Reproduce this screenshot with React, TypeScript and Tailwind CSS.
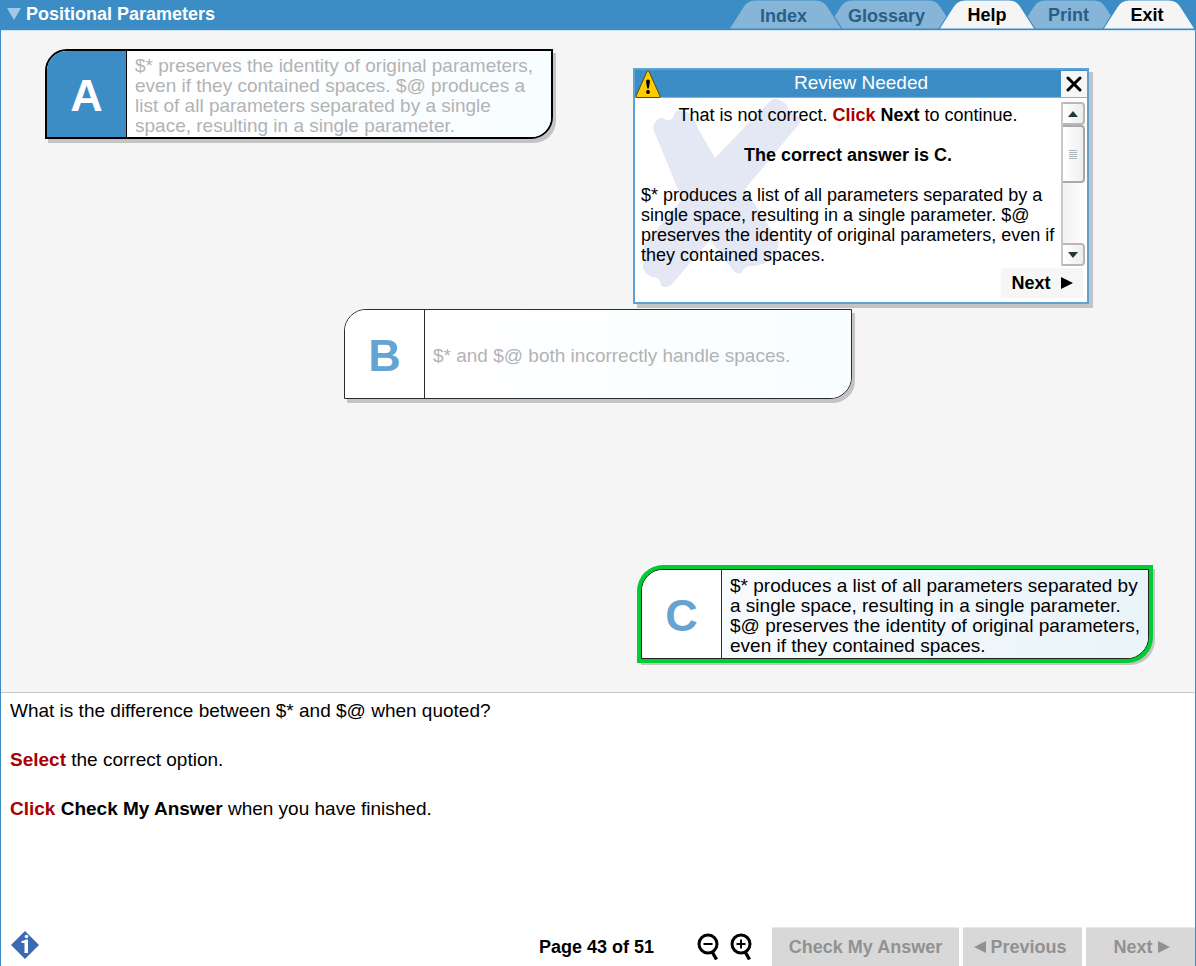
import { useState } from "react";
import type { ReactNode } from "react";
import clsx from "clsx";

type TabProps = { label: string; width: number; className: string; active?: boolean };

function tabPath(w: number) {
  return `M0 29 L14 7 Q18 0 26 0 H${w - 26} Q${w - 18} 0 ${w - 14} 7 L${w} 29 Z`;
}

function Tab({ label, width, className, active = false }: TabProps) {
  return (
    <button
      type="button"
      className={clsx(
        "relative h-[29px] shrink-0 text-center text-lg font-bold leading-7",
        active ? "z-20 text-black" : "text-[#275f89]",
        className,
      )}
    >
      <svg
        className="absolute inset-0 h-full w-full overflow-visible"
        viewBox={`0 0 ${width} 29`}
        preserveAspectRatio="none"
        aria-hidden="true"
      >
        <path d={tabPath(width)} fill={active ? "#f5f5f5" : "#87b5d8"} stroke="#3c8dc5" strokeWidth="1.2" />
      </svg>
      <span className="relative">{label}</span>
    </button>
  );
}

type CardProps = {
  letter: string;
  text: string;
  chosen?: boolean;
  correct?: boolean;
  className: string;
  onSelect: () => void;
};

function AnswerCard({ letter, text, chosen = false, correct = false, className, onSelect }: CardProps) {
  return (
    <button
      type="button"
      aria-pressed={chosen}
      onClick={onSelect}
      className={clsx(
        "flex h-[90px] w-[508px] overflow-hidden rounded-tl-[22px] rounded-br-[22px] border bg-white text-left",
        correct
          ? "border-[#222] text-black shadow-[0_0_0_4px_#00cc33,3px_3px_0_3px_#c4c4c4]"
          : "text-[#b3b3b3] shadow-[3px_4px_0_#c4c4c4]",
        chosen ? "border-2 border-black" : "border-[#2b2b2b]",
        className,
      )}
    >
      <span
        className={clsx(
          "flex w-20 shrink-0 items-center justify-center self-stretch border-r pt-1 text-[45px] font-bold",
          chosen ? "border-black bg-[#3c8dc5] text-white" : "border-[#2b2b2b] bg-white text-[#65a4d2]",
        )}
      >
        {letter}
      </span>
      <span
        className={clsx(
          "flex flex-1 items-center self-stretch bg-linear-to-r pt-1 pl-2 text-[19px] leading-5",
          correct ? "from-[#f8fbfe] to-[#e9f4f9]" : "from-white to-[#f8fdff]",
        )}
      >
        <span>{text}</span>
      </span>
    </button>
  );
}

function Dialog({ onClose }: { onClose: () => void }) {
  return (
    <section
      role="dialog"
      aria-labelledby="review-title"
      className="absolute top-[37px] right-[106px] z-10 w-[456px] border-2 border-[#5ca2d3] bg-white shadow-[4px_4px_0_#c4c4c4]"
    >
      <header className="flex h-7 items-center border-b border-[#87b5d8] bg-[#3c8dc5]">
        <svg className="h-7 w-[26px]" viewBox="0 0 26 28" aria-hidden="true">
          <path d="M12 1.5 Q13 0 14 1.5 L25 26 Q25.500 27.500 24 27.500 H2 Q.5 27.500 1 26 Z" fill="#ffcc00" stroke="#4a4a20" strokeWidth="1" />
          <path d="M11 11.500 Q11 9.500 13 9.500 Q15 9.500 15 11.500 L13.700 18.500 H12.300 Z" fill="#000" />
          <circle cx="13" cy="22" r="1.900" fill="#000" />
        </svg>
        <h2 id="review-title" className="flex-1 text-center text-[19px] text-white">
          Review Needed
        </h2>
        <button type="button" aria-label="Close" onClick={onClose} className="flex h-[26px] w-[26px] items-center justify-center bg-[#f6f6f6]">
          <svg className="h-4 w-4" viewBox="0 0 16 16" aria-hidden="true">
            <path d="M2 2 L14 14 M14 2 L2 14" stroke="#000" strokeWidth="3" strokeLinecap="round" />
          </svg>
        </button>
      </header>
      <div className="flex pt-1">
        <div className="relative flex-1 px-1.5 text-lg leading-5">
          <svg className="absolute -top-1 left-2 h-[190px] w-[158px]" viewBox="643 98 158 190" aria-hidden="true">
            <path
              d="M654 131 Q652 126 655 123 Q658 117 663 118 Q667 121 670 120 Q673 119 674 115 Q675 109 682 111 Q689 111 694 119 Q696 124 700 132 L715 158 L767 104 Q774 97 779 100 Q786 102 788 108 Q788 112 796 115 Q802 118 799 124 L745 189 L777 239 Q781 245 776 251 Q771 257 767 262 Q760 266 748 266 Q744 268 742 272 Q738 276 733 270 L710 240 L672 284 Q666 290 661 285 Q660 277 652 277 Q642 273 643 264 Q646 257 643 251 Q643 245 648 240 L682 199 Z"
              fill="#e4e7f4"
            />
          </svg>
          <div className="relative">
            <p className="pt-[3px] text-center">
              That is not correct. <b className="text-[#a80000]">Click</b> <b>Next</b> to continue.
            </p>
            <p className="py-5 text-center font-bold">The correct answer is C.</p>
            <p>
              $* produces a list of all parameters separated by a single space, resulting in a single parameter. $@
              preserves the identity of original parameters, even if they contained spaces.
            </p>
          </div>
        </div>
        <div className="mr-0.5 flex h-[164px] w-6 shrink-0 flex-col border-l-2 border-[#c8c8c8] bg-linear-to-r from-[#f0f0f0] to-white">
          <ScrollButton label="Scroll up">
            <path d="M0 6 L5 0 L10 6 Z" />
          </ScrollButton>
          <div className="flex h-[58px] flex-col items-center justify-center gap-px rounded-r-sm border-2 border-l-0 border-[#a9a9a9] bg-linear-to-r from-white to-[#f0f0f0]">
            <i className="h-px w-2 bg-[#a9b5b8]" />
            <i className="h-px w-2 bg-[#a9b5b8]" />
            <i className="h-px w-2 bg-[#a9b5b8]" />
            <i className="h-px w-2 bg-[#a9b5b8]" />
            <i className="h-px w-2 bg-[#a9b5b8]" />
          </div>
          <div className="flex-1" />
          <ScrollButton label="Scroll down">
            <path d="M0 0 H10 L5 6 Z" />
          </ScrollButton>
        </div>
      </div>
      <div className="flex justify-end pt-0.5 pr-1 pb-1">
        <button type="button" className="flex h-[30px] w-[82px] items-center justify-center gap-2.5 bg-[#f6f6f6] text-lg font-bold">
          Next
          <svg className="h-3 w-3" viewBox="0 0 12 12" aria-hidden="true">
            <path d="M0 0 L12 6 L0 12 Z" />
          </svg>
        </button>
      </div>
    </section>
  );
}

function ScrollButton({ label, children }: { label: string; children: ReactNode }) {
  return (
    <button type="button" aria-label={label} className="flex h-[23px] shrink-0 items-center justify-center rounded-r-sm border-2 border-l-0 border-[#b8b8b8] bg-linear-to-r from-white to-[#ededed]">
      <svg className="h-1.5 w-2.5" viewBox="0 0 10 6" fill="#263640" aria-hidden="true">
        {children}
      </svg>
    </button>
  );
}

function ZoomButton({ label, plus = false }: { label: string; plus?: boolean }) {
  return (
    <button type="button" aria-label={label}>
      <svg className="h-7 w-[23px]" viewBox="0 0 23 28" fill="none" stroke="#000" aria-hidden="true">
        <circle cx="11" cy="11" r="9" strokeWidth="3" />
        <path d="M15.500 19.500 L19.500 26.500" strokeWidth="3.400" />
        <path d={plus ? "M6.500 11 H15.500 M11 6.500 V15.500" : "M6.500 11 H15.500"} strokeWidth="2" />
      </svg>
    </button>
  );
}

const footerButton = "flex h-[39px] items-center justify-center border-t border-[#e8e8e8] bg-[#d8d8d8] text-lg font-bold text-[#919191]";

export default function App() {
  const [open, setOpen] = useState(true);
  const [choice, setChoice] = useState("A");

  return (
    <div className="flex min-h-screen flex-col border-x border-[#3c8dc5] bg-white font-['Liberation_Sans',Arial,sans-serif] text-black">
      <header className="flex h-[31px] items-start justify-between border-b border-[#cfe3f0] bg-[#3c8dc5]">
        <div className="flex h-7 items-center gap-[5px] pl-1.5">
          <svg className="h-3.5 w-3.5" viewBox="0 0 14 14" aria-hidden="true">
            <path d="M0 1 H14 L7 13 Z" fill="#9fc9e6" />
          </svg>
          <h1 className="text-lg font-bold text-white">Positional Parameters</h1>
        </div>
        <nav className="flex" aria-label="Course">
          <Tab label="Index" width={113} className="z-10 w-[113px] pt-0.5 pr-1" />
          <Tab label="Glossary" width={129} className="-ml-4 w-[129px] pt-0.5 pr-2" />
          <Tab label="Help" width={96} active className="-ml-4 w-24 pt-px" />
          <Tab label="Print" width={101} className="-ml-4 w-[101px] pt-px pr-0.5" />
          <Tab label="Exit" width={92} active className="-ml-[17px] w-[92px] pt-px pr-1" />
        </nav>
      </header>

      <main className="flex flex-1 flex-col">
        <div className="relative flex flex-col gap-[170px] border-b border-[#c8c8c8] bg-[#f5f5f5] px-11 pt-[18px] pb-[33px]">
          <AnswerCard
            letter="A"
            chosen={choice === "A"}
            onSelect={() => setChoice("A")}
            className="self-start"
            text="$* preserves the identity of original parameters, even if they contained spaces. $@ produces a list of all parameters separated by a single space, resulting in a single parameter."
          />
          <AnswerCard
            letter="B"
            chosen={choice === "B"}
            onSelect={() => setChoice("B")}
            className="self-center"
            text="$* and $@ both incorrectly handle spaces."
          />
          <AnswerCard
            letter="C"
            correct
            chosen={choice === "C"}
            onSelect={() => setChoice("C")}
            className="mr-0.5 self-end"
            text="$* produces a list of all parameters separated by a single space, resulting in a single parameter. $@ preserves the identity of original parameters, even if they contained spaces."
          />
          {open && <Dialog onClose={() => setOpen(false)} />}
        </div>

        <section className="flex flex-1 flex-col gap-[25px] px-[9px] pt-1.5 text-[19px] leading-6">
          <p>What is the difference between $* and $@ when quoted?</p>
          <p>
            <b className="text-[#a80000]">Select</b> the correct option.
          </p>
          <p>
            <b className="text-[#a80000]">Click</b> <b>Check My Answer</b> when you have finished.
          </p>
        </section>
      </main>

      <footer className="flex h-[39px] items-center">
        <button type="button" aria-label="Information" className="mb-1 ml-2.5">
          <svg className="h-7 w-7" viewBox="0 0 28 28" aria-hidden="true">
            <path d="M14 0 L28 14 L14 28 L0 14 Z" fill="#3d68b4" />
            <path d="M10.500 10 Q13.500 9.500 14.500 8.500 H17 V22 H13.500 V12 H10.500 Z" fill="#fff" />
            <circle cx="15.500" cy="5.500" r="1.800" fill="#fff" />
          </svg>
        </button>
        <span className="ml-auto text-lg font-bold">Page 43 of 51</span>
        <div className="mr-[19px] ml-[43px] flex gap-2.5">
          <ZoomButton label="Zoom out" />
          <ZoomButton label="Zoom in" plus />
        </div>
        <div className="flex gap-1">
          <button type="button" className={clsx(footerButton, "w-[187px]")}>
            Check My Answer
          </button>
          <button type="button" className={clsx(footerButton, "w-[119px] gap-1 pr-1")}>
            <svg className="h-3 w-3" viewBox="0 0 12 12" fill="#919191" aria-hidden="true">
              <path d="M12 0 L0 6 L12 12 Z" />
            </svg>
            Previous
          </button>
          <button type="button" className={clsx(footerButton, "w-[109px] gap-[5px] pl-0.5")}>
            Next
            <svg className="h-3 w-3" viewBox="0 0 12 12" fill="#919191" aria-hidden="true">
              <path d="M0 0 L12 6 L0 12 Z" />
            </svg>
          </button>
        </div>
      </footer>
    </div>
  );
}
